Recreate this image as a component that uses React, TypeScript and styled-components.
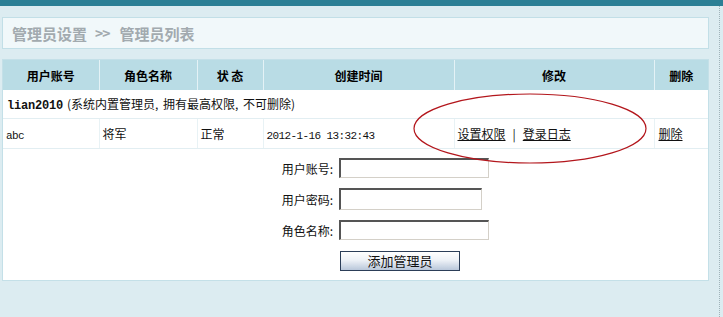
import React from "react";
import styled, { createGlobalStyle } from "styled-components";

const GlobalStyle = createGlobalStyle`
	html, body {
		margin: 0;
		padding: 0;
		background: #dcecf1;
		font-family: "Noto Sans CJK SC", "Liberation Sans", sans-serif;
		font-size: 12px;
		color: #111;
	}
`;

const Page = styled.div`
	width: 720px;
	min-height: 317px;
	border-right: 1px dotted #9fb3ba;
	box-sizing: border-box;
`;

const TopBar = styled.div`
	height: 6px;
	width: 723px;
	background: #2b7f95;
`;

const Main = styled.div`
	padding: 11px 0 0 2px;
	width: 707px;
	display: flex;
	flex-direction: column;
	gap: 10px;
`;

const Breadcrumb = styled.div`
	height: 30px;
	display: flex;
	align-items: center;
	padding-left: 9px;
	gap: 8px;
	background: #f1f8fa;
	border: 1px solid #c2dfe7;
	color: #a2aaaf;
	font-size: 15px;
	font-weight: bold;
`;

const Arrow = styled.span`
	font-size: 14px;
	letter-spacing: -1px;
	margin-right: 2px;
`;

const Panel = styled.div`
	position: relative;
	background: #fff;
	border: 1px solid #c4e0e8;
`;

const Table = styled.table`
	width: 705px;
	table-layout: fixed;
	border-collapse: collapse;
`;

const Th = styled.th`
	height: 30px;
	padding: 0;
	background: #b9dce5;
	border-right: 1px solid #e4f2f6;
	font-size: 12px;
	font-weight: bold;
	text-align: center;
	color: #000;
	&:last-child {
		border-right: 0;
	}
`;

const Td = styled.td<{ $h: number }>`
	height: ${(p) => p.$h - 1}px;
	padding: 0 0 0 3px;
	border-bottom: 1px solid #e2eef2;
	border-right: 1px solid #e8f2f5;
	white-space: nowrap;
	&:last-child {
		border-right: 0;
		padding-left: 4px;
	}
`;

const Mono = styled.span<{ $bold?: boolean }>`
	font-family: "Liberation Mono", "DejaVu Sans Mono", monospace;
	font-size: ${(p) => (p.$bold ? "12px" : "11px")};
	font-weight: ${(p) => (p.$bold ? "bold" : "normal")};
	letter-spacing: ${(p) => (p.$bold ? "-0.2px" : "-0.6px")};
`;

const Note = styled.span`
	margin-left: 4px;
	word-spacing: 2px;
`;

const Link = styled.a`
	color: #111;
	text-decoration: underline;
	cursor: pointer;
`;

const Sep = styled.span`
	margin: 0 7px;
`;

const FormCell = styled.td`
	padding: 9px 0;
`;

const Form = styled.div`
	display: grid;
	grid-template-columns: 330px auto;
	column-gap: 6px;
	row-gap: 10px;
	align-items: center;
	justify-items: start;
`;

const Label = styled.label`
	justify-self: end;
	font-size: 12px;
	color: #111;
`;

const Input = styled.input<{ $w: number; $h: number }>`
	width: ${(p) => p.$w}px;
	height: ${(p) => p.$h}px;
	box-sizing: border-box;
	margin: 0;
	padding: 0 3px;
	border-style: solid;
	border-width: 2px 1px 1px 2px;
	border-color: #555 #d4d0c8 #d4d0c8 #555;
	background: #fff;
`;

const Button = styled.button`
	grid-column: 2;
	width: 120px;
	height: 20px;
	margin: 1px 0 0 1px;
	padding: 0;
	border: 1px solid #2c3e58;
	background: linear-gradient(#ffffff 0%, #eef2f7 45%, #b9c7da 100%);
	font-family: "Noto Sans CJK SC", sans-serif;
	font-size: 13px;
	color: #111;
	line-height: 18px;
`;

const Mark = styled.svg`
	position: absolute;
	left: 409px;
	top: 32px;
	pointer-events: none;
`;

const columns = [96, 98, 66, 191, 200, 54];
const headers = ["用户账号", "角色名称", "状 态", "创建时间", "修改", "删除"];

export default function App() {
	return (
		<Page>
			<GlobalStyle />
			<TopBar />
			<Main>
				<Breadcrumb>
					<span>管理员设置</span>
					<Arrow>&gt;&gt;</Arrow>
					<span>管理员列表</span>
				</Breadcrumb>
				<Panel>
					<Table>
						<colgroup>
							{columns.map((w, i) => (
								<col key={i} style={{ width: w }} />
							))}
						</colgroup>
						<thead>
							<tr>
								{headers.map((h) => (
									<Th key={h}>{h}</Th>
								))}
							</tr>
						</thead>
						<tbody>
							<tr>
								<Td $h={29} colSpan={6}>
									<Mono $bold>lian2010</Mono>
									<Note>(系统内置管理员, 拥有最高权限, 不可删除)</Note>
								</Td>
							</tr>
							<tr>
								<Td $h={30}>
									<Mono>abc</Mono>
								</Td>
								<Td $h={30}>将军</Td>
								<Td $h={30}>正常</Td>
								<Td $h={30}>
									<Mono>2012-1-16 13:32:43</Mono>
								</Td>
								<Td $h={30}>
									<Link>设置权限</Link>
									<Sep>|</Sep>
									<Link>登录日志</Link>
								</Td>
								<Td $h={30}>
									<Link>删除</Link>
								</Td>
							</tr>
							<tr>
								<FormCell colSpan={6}>
									<Form>
										<Label>用户账号:</Label>
										<Input $w={150} $h={20} />
										<Label>用户密码:</Label>
										<Input type="password" $w={143} $h={22} />
										<Label>角色名称:</Label>
										<Input $w={150} $h={20} />
										<Button>添加管理员</Button>
									</Form>
								</FormCell>
							</tr>
						</tbody>
					</Table>
					<Mark width="236" height="73" viewBox="0 0 236 73">
						<ellipse cx="118" cy="36.5" rx="116" ry="34.5" fill="none" stroke="#b3161c" strokeWidth="1.2" />
					</Mark>
				</Panel>
			</Main>
		</Page>
	);
}
